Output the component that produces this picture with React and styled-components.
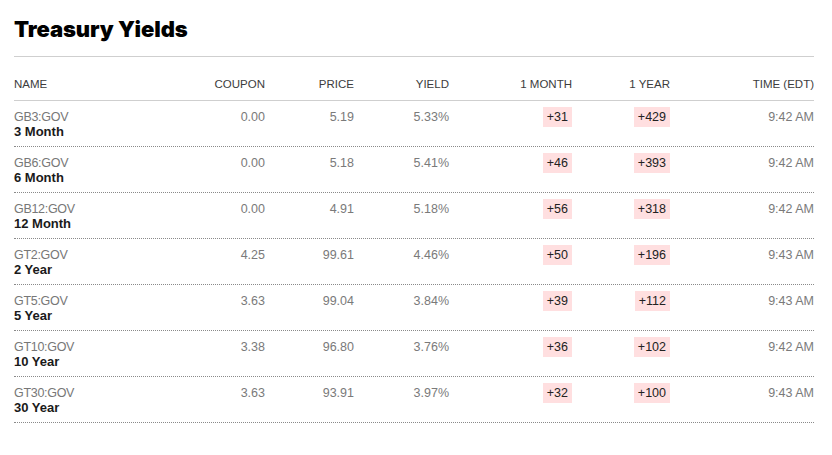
import styled, { createGlobalStyle } from 'styled-components';

const GlobalStyle = createGlobalStyle`
	body {
		margin: 0;
		background: #fff;
		font-family: 'Liberation Sans', Arial, sans-serif;
	}
`;

const rows = [
	{ ticker: 'GB3:GOV', name: '3 Month', coupon: '0.00', price: '5.19', yld: '5.33%', month: '+31', year: '+429', time: '9:42 AM' },
	{ ticker: 'GB6:GOV', name: '6 Month', coupon: '0.00', price: '5.18', yld: '5.41%', month: '+46', year: '+393', time: '9:42 AM' },
	{ ticker: 'GB12:GOV', name: '12 Month', coupon: '0.00', price: '4.91', yld: '5.18%', month: '+56', year: '+318', time: '9:42 AM' },
	{ ticker: 'GT2:GOV', name: '2 Year', coupon: '4.25', price: '99.61', yld: '4.46%', month: '+50', year: '+196', time: '9:43 AM' },
	{ ticker: 'GT5:GOV', name: '5 Year', coupon: '3.63', price: '99.04', yld: '3.84%', month: '+39', year: '+112', time: '9:43 AM' },
	{ ticker: 'GT10:GOV', name: '10 Year', coupon: '3.38', price: '96.80', yld: '3.76%', month: '+36', year: '+102', time: '9:42 AM' },
	{ ticker: 'GT30:GOV', name: '30 Year', coupon: '3.63', price: '93.91', yld: '3.97%', month: '+32', year: '+100', time: '9:43 AM' },
];

const columns = '165px 86px 89px 95px 123px 98px 144px';

const Page = styled.div`
	width: 800px;
	padding: 16px 14px 0;
`;

const Title = styled.h2`
	margin: 0 0 14px;
	font-family: Inter, 'Liberation Sans', sans-serif;
	font-size: 22px;
	line-height: 26px;
	font-weight: 900;
	letter-spacing: -0.1px;
	color: #000;
`;

const Table = styled.div`
	border-top: 1px solid #cfcfcf;
`;

const HeadRow = styled.div`
	display: grid;
	grid-template-columns: ${columns};
	padding: 19px 0 8px;
	border-bottom: 1px solid #cfcfcf;
`;

const HeadCell = styled.div`
	font-size: 11.5px;
	line-height: 16px;
	color: #3c3c3c;
	text-transform: uppercase;
	text-align: ${({ $left }) => ($left ? 'left' : 'right')};
`;

const Row = styled.div`
	display: grid;
	grid-template-columns: ${columns};
	height: 45px;
	border-bottom: 1px dotted #8a8a8a;
`;

const NameCell = styled.div`
	padding-top: 9px;
	font-size: 12.5px;
	line-height: 15px;
`;

const Ticker = styled.div`
	color: #777;
	letter-spacing: -0.3px;
`;

const Name = styled.div`
	font-size: 13px;
	line-height: 14px;
	color: #1a1a1a;
	font-weight: 700;
`;

const NumCell = styled.div`
	padding-top: 6px;
	font-size: 12.5px;
	line-height: 20px;
	text-align: right;
	color: #7a7a7a;
`;

const Badge = styled.span`
	display: inline-block;
	padding: 0 4px;
	background: #ffdfe0;
	color: #222;
`;

export default function App() {
	return (
		<Page>
			<GlobalStyle />
			<Title>Treasury Yields</Title>
			<Table>
				<HeadRow>
					<HeadCell $left>Name</HeadCell>
					<HeadCell>Coupon</HeadCell>
					<HeadCell>Price</HeadCell>
					<HeadCell>Yield</HeadCell>
					<HeadCell>1 Month</HeadCell>
					<HeadCell>1 Year</HeadCell>
					<HeadCell>Time (EDT)</HeadCell>
				</HeadRow>
				{rows.map((r) => (
					<Row key={r.ticker}>
						<NameCell>
							<Ticker>{r.ticker}</Ticker>
							<Name>{r.name}</Name>
						</NameCell>
						<NumCell>{r.coupon}</NumCell>
						<NumCell>{r.price}</NumCell>
						<NumCell>{r.yld}</NumCell>
						<NumCell>
							<Badge>{r.month}</Badge>
						</NumCell>
						<NumCell>
							<Badge>{r.year}</Badge>
						</NumCell>
						<NumCell>{r.time}</NumCell>
					</Row>
				))}
			</Table>
		</Page>
	);
}
